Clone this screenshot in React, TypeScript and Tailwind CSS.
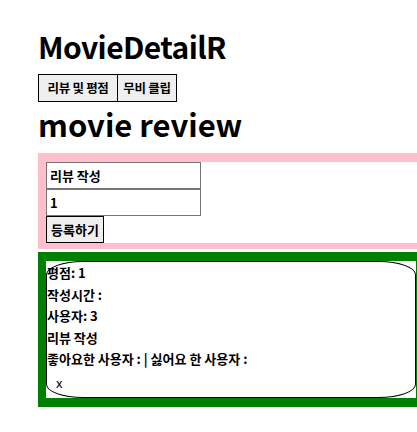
import React from 'react';

const font = { fontFamily: '"Noto Sans CJK KR", "Noto Sans", sans-serif' };

export default function App() {
  return (
    <div className="min-h-[432px] bg-white pl-[38px] pt-[26px] text-black" style={font}>
      <h1 className="text-[30px] font-bold leading-[40px] tracking-[-0.6px]">MovieDetailR</h1>

      {/* Tabs */}
      <div className="mt-[8px] flex">
        <button className="h-[28px] w-[80px] border border-black bg-[#efefef] text-[12.5px] font-bold tracking-[-0.3px]">
          리뷰 및 평점
        </button>
        <button className="-ml-px h-[28px] w-[60px] border border-black bg-[#efefef] text-[12.5px] font-bold tracking-[-0.3px]">
          무비 클립
        </button>
      </div>

      <h1 className="mt-[2px] text-[31px] font-bold leading-[40px]">movie review</h1>

      {/* Write form */}
      <div className="mt-[9px] bg-[#ffc0cb] pb-[6px] pl-[8px] pt-[9px]">
        <div className="flex flex-col items-start bg-white">
          <input
            className="h-[27px] w-[155px] border border-[#767676] px-[3px] text-[13px] font-bold outline-none"
            defaultValue="리뷰 작성"
          />
          <input
            className="h-[27px] w-[155px] border border-[#767676] px-[3px] text-[13px] font-bold outline-none"
            defaultValue="1"
          />
          <button className="h-[27px] w-[58px] border border-black bg-[#efefef] text-[13px] font-bold">
            등록하기
          </button>
        </div>
      </div>

      {/* Review list */}
      <div className="mt-[3px] bg-[#008000] pb-[9px] pl-[8px] pr-px pt-[9px]">
        <div className="bg-white">
          <div className="h-[137px] rounded-[10%] border border-black text-[13px] font-bold leading-[21.5px]">
            <div>평점: 1</div>
            <div>작성시간 :</div>
            <div>사용자: 3</div>
            <div>리뷰 작성</div>
            <div>좋아요한 사용자 : | 싫어요 한 사용자 :</div>
            <div className="pl-[9px] pt-[2px] font-normal">x</div>
          </div>
        </div>
      </div>
    </div>
  );
}
